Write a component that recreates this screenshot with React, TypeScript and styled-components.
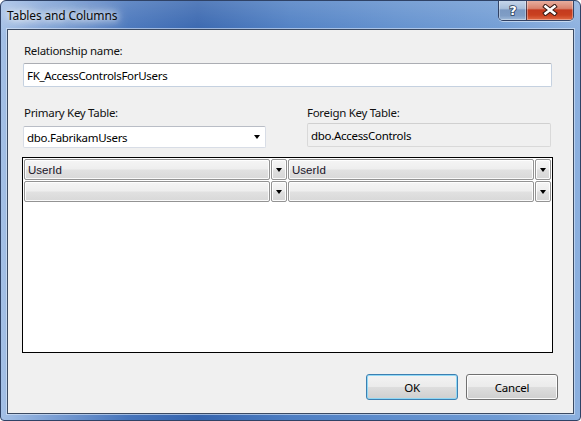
import React from "react";
import styled, { createGlobalStyle } from "styled-components";

const Global = createGlobalStyle`
  html, body { margin: 0; padding: 0; background: #ffffff; }
  body { font-family: "Noto Sans", "Open Sans", sans-serif; }
  * { box-sizing: border-box; }
`;

const Window = styled.div`
  width: 581px;
  height: 421px;
  display: flex;
  flex-direction: column;
  border-radius: 6px 6px 4px 4px;
  border: 1px solid #2f4266;
  background:
    linear-gradient(180deg, rgba(255,255,255,0.16) 0%, rgba(255,255,255,0) 36px),
    linear-gradient(90deg, #a4c0e6 0%, #7b9fd4 9%, #4674bb 22%, #3564ae 34%, #4d7ec3 50%, #5f8ecd 68%, #6f9bd4 86%, #8cb0df 100%);
  overflow: hidden;
`;

const TitleBar = styled.div`
  height: 28px;
  display: flex;
  justify-content: space-between;
  align-items: flex-start;
  padding: 0 6px 0 6px;
`;

const Title = styled.div`
  margin-top: 8px;
  font-family: "Noto Sans", "Open Sans", sans-serif;
  font-size: 12px;
  line-height: 14px;
  color: #0a0a0a;
  text-shadow: 0 0 6px #ffffff, 0 0 10px #ffffff, 0 0 14px rgba(255,255,255,0.9);
  letter-spacing: -0.15px;
`;

const CaptionGroup = styled.div`
  display: flex;
  flex-shrink: 0;
  margin-top: -1px;
  border: 1px solid rgba(30, 40, 70, 0.8);
  border-top: none;
  border-radius: 0 0 5px 5px;
  overflow: hidden;
  box-shadow: 0 1px 0 rgba(255,255,255,0.5);
`;

const CaptionButton = styled.div<{ $kind: "help" | "close" }>`
  width: ${(p) => (p.$kind === "close" ? "47px" : "27px")};
  flex-shrink: 0;
  height: 20px;
  display: flex;
  align-items: center;
  justify-content: center;
  border-left: ${(p) => (p.$kind === "close" ? "1px solid rgba(30,40,70,0.7)" : "none")};
  box-shadow: inset 0 0 0 1px rgba(255,255,255,0.35);
  background: ${(p) =>
    p.$kind === "close"
      ? "linear-gradient(180deg, #e9b3a5 0%, #d9836e 42%, #c43a1f 50%, #c9401f 75%, #e06a45 100%)"
      : "linear-gradient(180deg, #c9d8ec 0%, #a9bfdb 42%, #7b99c2 50%, #7f9dc5 78%, #a0bada 100%)"};
`;

const ContentFrame = styled.div`
  flex: 1;
  display: flex;
  padding: 0 6px 6px 6px;
`;

const Client = styled.div`
  flex: 1;
  border: 1px solid #3b4a62;
  box-shadow: 0 0 0 1px rgba(220, 232, 248, 0.6);
  background: #f0f0f0;
  display: flex;
  flex-direction: column;
  padding: 13px 15px 13px 15px;
`;

const Label = styled.div<{ $indent?: number }>`
  font-family: "Noto Sans", "Open Sans", sans-serif;
  font-size: 11.5px;
  line-height: 16px;
  color: #111111;
  margin-left: ${(p) => p.$indent ?? 1}px;
  letter-spacing: -0.3px;
  white-space: nowrap;
`;

const TextBox = styled.div<{ $readOnly?: boolean; $top?: number; $h?: number; $w?: string }>`
  margin-top: ${(p) => p.$top ?? 4}px;
  width: ${(p) => p.$w ?? "100%"};
  height: ${(p) => p.$h ?? 24}px;
  border: 1px solid ${(p) => (p.$readOnly ? "#d9d9d9" : "#c5d1e0")};
  border-top-color: ${(p) => (p.$readOnly ? "#d0d0d0" : "#abadb3")};
  border-radius: 2px;
  background: ${(p) => (p.$readOnly ? "#f0f0f0" : "#ffffff")};
  display: flex;
  align-items: center;
  padding-left: 3px;
  font-family: "Noto Sans", "Open Sans", sans-serif;
  font-size: 11.5px;
  color: #000000;
  letter-spacing: -0.3px;
  white-space: nowrap;
`;

const Combo = styled.div`
  margin-top: 5px;
  height: 22px;
  width: 100%;
  border: 1px solid #d8dde6;
  border-top-color: #b9bdc6;
  border-radius: 2px;
  background: #ffffff;
  display: flex;
  align-items: center;
  justify-content: space-between;
  padding: 0 5px 0 3px;
  font-family: "Noto Sans", "Open Sans", sans-serif;
  font-size: 11.5px;
  color: #000000;
  letter-spacing: -0.3px;
`;

const Arrow = styled.span`
  width: 0;
  height: 0;
  border-left: 3.5px solid transparent;
  border-right: 3.5px solid transparent;
  border-top: 4px solid #000;
`;

const KeyRow = styled.div`
  margin-top: 18px;
  display: grid;
  grid-template-columns: 243px 244px;
  column-gap: 41px;
  align-items: start;
`;

const Column = styled.div`
  display: flex;
  flex-direction: column;
`;

const Grid = styled.div`
  margin-top: 9px;
  margin-left: -1px;
  width: 531px;
  height: 196px;
  border: 1px solid #000;
  background: #ffffff;
  padding: 1px 0 0 1px;
  display: flex;
  flex-direction: column;
  gap: 1px;
`;

const GridRow = styled.div`
  display: flex;
  height: 21px;
`;

const Cell = styled.div`
  width: 264px;
  display: flex;
  gap: 1px;
  padding-right: 1px;
`;

const CellBody = styled.div`
  flex: 1;
  border: 1px solid #939393;
  border-radius: 2px;
  box-shadow: inset 0 0 0 1px rgba(255,255,255,0.85);
  background: linear-gradient(180deg, #f5f5f5 0%, #eeeeee 48%, #e1e1e1 52%, #d8d8d8 100%);
  display: flex;
  align-items: center;
  padding-left: 3px;
  font-family: "Liberation Sans", Arial, sans-serif;
  font-size: 11.5px;
  color: #1a1428;
`;

const CellButton = styled.div`
  width: 16px;
  border: 1px solid #939393;
  border-radius: 2px;
  box-shadow: inset 0 0 0 1px rgba(255,255,255,0.9);
  background: linear-gradient(180deg, #f6f6f6 0%, #ededed 48%, #dfdfdf 52%, #d6d6d6 100%);
  display: flex;
  align-items: center;
  justify-content: center;
`;

const ButtonBar = styled.div`
  margin-top: auto;
  display: flex;
  justify-content: flex-end;
  gap: 8px;
`;

const Button = styled.div<{ $default?: boolean }>`
  width: 92px;
  height: 26px;
  border: 1px solid ${(p) => (p.$default ? "#3c7fb1" : "#707070")};
  border-radius: 3px;
  box-shadow: inset 0 0 0 1px ${(p) => (p.$default ? "rgba(140,215,245,0.95)" : "rgba(255,255,255,0.85)")};
  background: linear-gradient(180deg, #f3f3f3 0%, #ebebeb 48%, #dddddd 52%, #cfcfcf 100%);
  display: flex;
  align-items: center;
  justify-content: center;
  font-family: "Noto Sans", "Open Sans", sans-serif;
  font-size: 11.5px;
  letter-spacing: -0.2px;
  color: #000000;
`;

const HelpIcon = () => (
  <svg width="12" height="14" viewBox="0 0 12 14">
    <text
      x="6"
      y="12"
      textAnchor="middle"
      fontFamily="DejaVu Sans, sans-serif"
      fontWeight="bold"
      fontSize="13"
      fill="#ffffff"
      stroke="#2b3e5c"
      strokeWidth="1.6"
      paintOrder="stroke"
    >
      ?
    </text>
  </svg>
);

const CloseIcon = () => (
  <svg width="16" height="12" viewBox="0 0 16 12">
    <path d="M3.5 2.5 L12.5 9.5 M12.5 2.5 L3.5 9.5" stroke="#3a1a14" strokeWidth="4.6" strokeLinecap="square" />
    <path d="M3.5 2.5 L12.5 9.5 M12.5 2.5 L3.5 9.5" stroke="#ffffff" strokeWidth="2.6" strokeLinecap="square" />
  </svg>
);

const rows = [
  { left: "UserId", right: "UserId" },
  { left: "", right: "" },
];

export default function App() {
  return (
    <>
      <Global />
      <Window>
        <TitleBar>
          <Title>Tables and Columns</Title>
          <CaptionGroup>
            <CaptionButton $kind="help">
              <HelpIcon />
            </CaptionButton>
            <CaptionButton $kind="close">
              <CloseIcon />
            </CaptionButton>
          </CaptionGroup>
        </TitleBar>
        <ContentFrame>
          <Client>
            <Label>Relationship name:</Label>
            <TextBox $w="529px">FK_AccessControlsForUsers</TextBox>
            <KeyRow>
              <Column>
                <Label>Primary Key Table:</Label>
                <Combo>
                  <span>dbo.FabrikamUsers</span>
                  <Arrow />
                </Combo>
              </Column>
              <Column>
                <Label $indent={0}>Foreign Key Table:</Label>
                <TextBox $readOnly $top={2} $h={24}>
                  dbo.AccessControls
                </TextBox>
              </Column>
            </KeyRow>
            <Grid>
              {rows.map((r, i) => (
                <GridRow key={i}>
                  <Cell>
                    <CellBody>{r.left}</CellBody>
                    <CellButton>
                      <Arrow />
                    </CellButton>
                  </Cell>
                  <Cell>
                    <CellBody>{r.right}</CellBody>
                    <CellButton>
                      <Arrow />
                    </CellButton>
                  </Cell>
                </GridRow>
              ))}
            </Grid>
            <ButtonBar>
              <Button $default>OK</Button>
              <Button>Cancel</Button>
            </ButtonBar>
          </Client>
        </ContentFrame>
      </Window>
    </>
  );
}
